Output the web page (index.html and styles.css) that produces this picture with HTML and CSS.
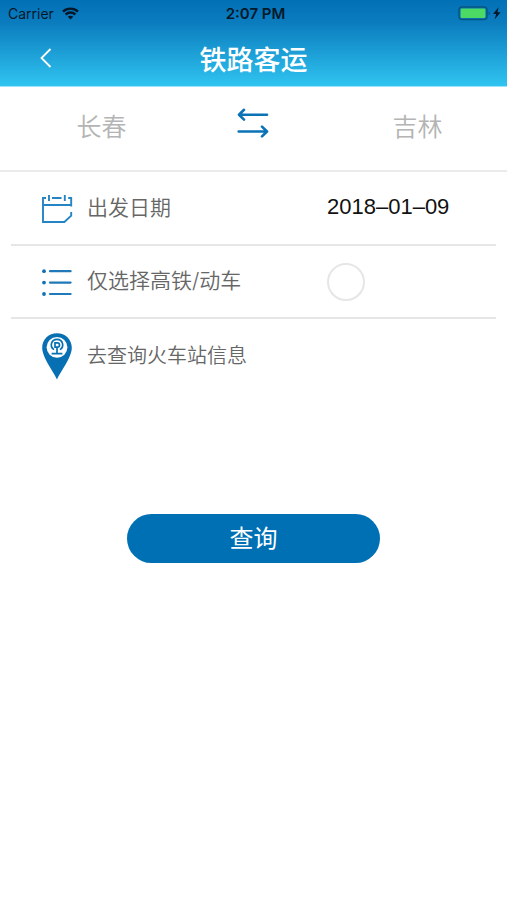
FILE: index.html
```html
<!DOCTYPE html>
<html lang="zh-CN">
<head>
    <meta charset="UTF-8">
    <meta name="viewport" content="width=device-width, initial-scale=1.0">
    <title>铁路客运</title>
    <link rel="stylesheet" href="styles.css">
</head>
<body>
    <header class="header">
        <div class="status-bar">
            <div class="carrier">
                <span>Carrier</span>
                <svg width="17" height="13" viewBox="0 0 17 13" fill="none" stroke="#04182b" stroke-width="2.4">
                    <path d="M1 4.6C5.2 .6 11.8 .6 16 4.6"/>
                    <path d="M3.6 7.5c2.8-2.6 7-2.6 9.8 0"/>
                    <path d="M8.5 12.6L5.7 9.8c1.6-1.4 4-1.4 5.6 0z" fill="#04182b" stroke="none"/>
                </svg>
            </div>
            <span class="time">2:07 PM</span>
            <div class="battery">
                <svg width="43" height="15" viewBox="0 0 43 15">
                    <rect x="1" y="1" width="28" height="12.5" rx="3" fill="none" stroke="#075580" stroke-width="1.4"/>
                    <rect x="2.6" y="2.6" width="24.8" height="9.4" rx="1.2" fill="#4cd964"/>
                    <path d="M30.7 5.2c1.6.6 1.6 3.6 0 4.2z" fill="#075580"/>
                    <path d="M40.6 1.2L35 8h3.2l-1.6 5.6L42.6 6.2h-3.2z" fill="#04182b"/>
                </svg>
            </div>
        </div>
        <div class="nav-bar">
            <button class="back-btn" aria-label="返回">
                <svg width="14" height="22" viewBox="0 0 14 22" fill="none" stroke="#fff" stroke-width="1.8">
                    <path d="M11.5 2L2.5 11l9 9"/>
                </svg>
            </button>
            <h1>铁路客运</h1>
        </div>
    </header>
    <main>
        <div class="cities">
            <button class="city">长春</button>
            <button class="swap-btn" aria-label="交换">
                <svg width="32" height="30" viewBox="0 0 32 30" fill="none" stroke="#0a72b5" stroke-width="2.6" stroke-linecap="round" stroke-linejoin="round">
                    <path d="M30 6.7H2.2M7 1.8L2 6.7l5 4.9"/>
                    <path d="M1.7 23.5h28M25 18.6l5 4.9-5 4.9"/>
                </svg>
            </button>
            <button class="city">吉林</button>
        </div>
        <form id="search-form">
            <div class="row">
                <svg class="icon" width="32" height="46" viewBox="0 0 32 46" fill="none" stroke="#2584c4" stroke-width="1.9">
                    <path d="M5 12H2v24h21.4l6.8-6.4V26M30.2 20.6V12h-3M11 12h9.5M2 19h28.2M8 9v6M23.8 9v6"/>
                </svg>
                <label for="date">出发日期</label>
                <input type="text" id="date" class="date" value="2018–01–09" readonly>
            </div>
            <div class="row">
                <svg class="icon" width="32" height="46" viewBox="0 0 32 46" fill="none" stroke="#2079b8" stroke-width="2.2" stroke-linecap="round">
                    <path d="M9 12.2h20.6M9 23.6h20.6M9 35h20.6"/>
                    <g fill="#1270b3" stroke="none">
                        <circle cx="3" cy="12.2" r="1.9"/>
                        <circle cx="3" cy="23.6" r="1.9"/>
                        <circle cx="3" cy="35" r="1.9"/>
                    </g>
                </svg>
                <label for="fast-only">仅选择高铁/动车</label>
                <input type="checkbox" id="fast-only" class="check">
            </div>
            <a class="row station" href="#">
                <svg class="icon" width="32" height="48" viewBox="0 0 32 48">
                    <path d="M16 47.5C13.5 41 1.2 25.5 1.2 15.7 1.2 7.2 7.8 1.2 16 1.2s14.8 6 14.8 14.5C30.8 25.5 18.5 41 16 47.5z" fill="#0670b3"/>
                    <circle cx="16" cy="15.3" r="10.4" fill="#fff"/>
                    <g fill="none" stroke="#0670b3" stroke-width="1.7">
                        <path d="M13 17.6C8.2 14.6 10.2 7.4 16 7.4s7.8 7.2 3 10.2"/>
                        <path d="M14 15.2v-4.4h2.4c2.8 0 2.8 4.4 0 4.4zM16 15.2v5.6M10.6 21.6h10.8"/>
                    </g>
                </svg>
                <span>去查询火车站信息</span>
            </a>
            <button type="submit" class="search-btn">查询</button>
        </form>
    </main>
    <script>
        const cities = document.querySelectorAll(".city");

        document.querySelector(".swap-btn").addEventListener("click", () => {
            const from = cities[0].innerText;
            cities[0].innerText = cities[1].innerText;
            cities[1].innerText = from;
        });

        document.getElementById("search-form").addEventListener("submit", (e) => {
            e.preventDefault();
        });
    </script>
</body>
</html>
```
FILE: styles.css
```css
* {
    box-sizing: border-box;
}

body {
    margin: 0;
    font-family: Inter, "Noto Sans CJK SC", sans-serif;
    background-color: #fff;
    color: #666;
}

button, input {
    font-family: inherit;
    padding: 0;
    border: none;
    background: none;
}

button {
    cursor: pointer;
}

svg {
    display: block;
    flex: none;
}

.header {
    background: linear-gradient(#0270b5, #0b7dbf 27%, #30c4f0);
    border-bottom: 1px solid #9be4fb;
}

.status-bar {
    display: grid;
    grid-template-columns: 1fr auto 1fr;
    align-items: center;
    height: 27px;
    padding: 0 6px 0 8px;
    font-size: 14px;
    color: #04182b;
}

.carrier {
    display: flex;
    align-items: center;
    gap: 8px;
}

.time {
    padding-left: 2px;
    font-size: 15px;
    font-weight: 600;
}

.battery {
    justify-self: end;
}

.nav-bar {
    display: grid;
    grid-template-columns: 60px 1fr 60px;
    align-items: center;
    height: 59px;
    padding-top: 4px;
}

.back-btn {
    justify-self: end;
    padding: 0 7px 2px;
}

h1 {
    margin: 0;
    padding-top: 4px;
    font-size: 27px;
    line-height: 40px;
    font-weight: 500;
    text-align: center;
    color: #fff;
}

.cities {
    display: grid;
    grid-template-columns: 2fr 1fr 2fr;
    align-items: center;
    height: 85px;
    padding-bottom: 4px;
    border-bottom: 2px solid #ebebeb;
}

.city {
    font-size: 25px;
    line-height: 36px;
    font-weight: 350;
    color: #b4b4b4;
}

.swap-btn {
    justify-self: center;
    padding-bottom: 8px;
}

.city:last-child {
    padding-left: 24px;
}

#search-form {
    padding-top: 1px;
}

.row {
    display: grid;
    grid-template-columns: 32px 226px 1fr;
    column-gap: 14px;
    align-items: center;
    height: 73px;
    margin: 0 11px;
    padding-left: 30px;
    border-bottom: 2px solid #e6e6e6;
    font-size: 21px;
    line-height: 30px;
    font-weight: 350;
}

.row label {
    padding-bottom: 2px;
}

.date {
    width: 100%;
    padding-bottom: 3px;
    font-family: "Liberation Sans", sans-serif;
    font-size: 22px;
    color: #111;
}

.check {
    appearance: none;
    width: 38px;
    height: 38px;
    margin: 0;
    border: 2px solid #e6e6e6;
    border-radius: 50%;
}

.check:checked {
    background: #0670b3;
}

.station {
    border: none;
    font-size: 20px;
    color: inherit;
    text-decoration: none;
}

.search-btn {
    display: block;
    width: 50%;
    height: 49px;
    margin: 122px auto 0;
    border-radius: 25px;
    background: #0070b5;
    color: #fff;
    font-size: 24px;
    line-height: 36px;
}
```
